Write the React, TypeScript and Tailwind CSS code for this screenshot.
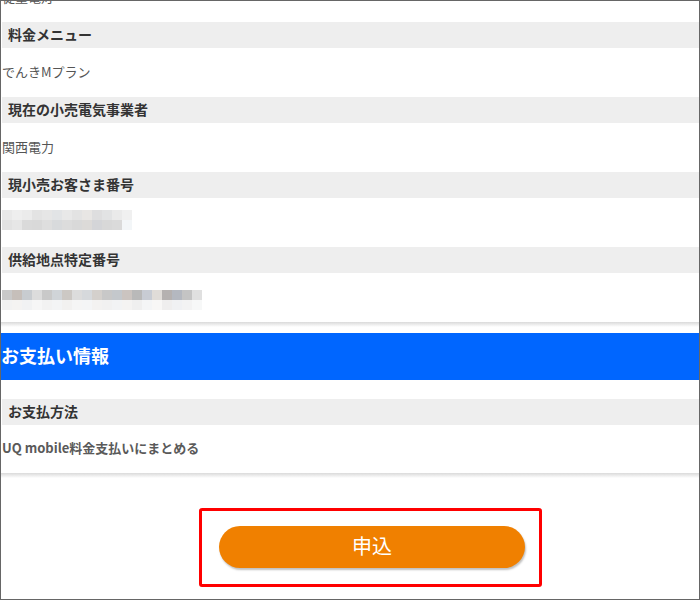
import React from "react";

const FONT = { fontFamily: '"Noto Sans CJK JP", "Noto Sans", sans-serif' };

const blur1a = ["#e9e9e9","#eeeeee","#ebebeb","#e3e3e3","#e6e6e6","#e2e4e6","#e8e8e8","#e3e3e3","#e8e6e4","#dededf","#e2e3e4","#eaeaea","#f0f0f0"];
const blur1b = ["#e2e2e2","#e6e6e6","#dadada","#d9d9d9","#dedede","#d8dadc","#dcdcdc","#d9d9d9","#dcdad8","#d4d5d8","#d8d8d8","#dadada","#f3f6f8"];
const blur2a = ["#c9c9c9","#c6bfba","#c8ccd0","#dcdcdc","#c9c9c9","#d0d4d8","#ccc8c4","#dcdcdc","#d6d9dc","#d4d0cc","#c8c8c8","#c4c8cc","#cbc4c0","#b9b9b9","#c8ccd4","#e0dcd8","#b5b1b0","#b4b8c0","#c4c4c4","#e0e0e0"];
const blur2b = ["#f2f2f2","#f4f3f2","#f1f2f3","#f6f6f6","#f2f2f2","#f3f4f5","#f2f1f0","#f5f5f5","#f4f5f6","#f3f2f1","#f1f1f1","#f2f3f4","#f4f3f2","#efefef","#f4f5f6","#f8f7f6","#efeeee","#f0f1f3","#f3f3f3","#f7f8f8"];

function Blur({ a, b, w }: { a: string[]; b: string[]; w: number }) {
  return (
    <div className="flex flex-col">
      <div className="flex h-[10px]">
        {a.map((c, i) => (
          <div key={i} className="h-full" style={{ background: c, width: w }} />
        ))}
      </div>
      <div className="flex h-[10px]">
        {b.map((c, i) => (
          <div key={i} className="h-full" style={{ background: c, width: w }} />
        ))}
      </div>
    </div>
  );
}

function Header({ children }: { children: React.ReactNode }) {
  return (
    <div className="ml-px h-[26px] bg-[#eeeeee] flex items-center pl-[6px] pb-[2px] text-[14px] font-bold text-[#333] leading-none">
      {children}
    </div>
  );
}

function Value({ children }: { children: React.ReactNode }) {
  return (
    <div className="h-[49px] flex items-center pl-px pb-[3px] text-[13px] leading-none text-[#555]">
      {children}
    </div>
  );
}

function Shadow() {
  return <div className="h-[5px] bg-gradient-to-b from-[#dadada] to-white" />;
}

export default function App() {
  return (
    <div
      className="w-[700px] h-[600px] border border-[#666] overflow-hidden bg-white"
      style={FONT}
    >
      <div className="-mt-[28px]">
        <Value>従量電灯</Value>
        <Header>料金メニュー</Header>
        <Value>でんきMプラン</Value>
        <Header>現在の小売電気事業者</Header>
        <Value>関西電力</Value>
        <Header>現小売お客さま番号</Header>
        <div className="h-[49px] pt-[12px] pl-px">
          <Blur a={blur1a} b={blur1b} w={10} />
        </div>
        <Header>供給地点特定番号</Header>
        <div className="h-[49px] pt-[17px] pl-px">
          <Blur a={blur2a} b={blur2b} w={10} />
        </div>
        <Shadow />
        <div className="h-[6px]" />
        <div className="h-[47px] bg-[#0066ff] flex items-center pb-[3px] text-white text-[18px] font-bold leading-none">
          お支払い情報
        </div>
        <div className="h-[19px]" />
        <Header>お支払方法</Header>
        <div className="h-[48px] flex items-center pl-px pb-[3px] text-[13px] leading-none font-bold text-[#5a5a5a]">
          UQ mobile料金支払いにまとめる
        </div>
        <Shadow />
        <div className="h-[30px]" />
        <div className="pl-[198px]">
          <div className="w-[343px] h-[79px] border-[3px] border-[#ff0000] rounded-[3px] pl-[17px] pt-[15px]">
            <button
              className="w-[306px] h-[42px] rounded-full bg-[#f08000] text-white text-[20px] leading-none flex items-center justify-center pb-[3px] shadow-[1px_2px_2px_rgba(0,0,0,0.25)]"
              style={FONT}
            >
              申込
            </button>
          </div>
        </div>
      </div>
    </div>
  );
}
